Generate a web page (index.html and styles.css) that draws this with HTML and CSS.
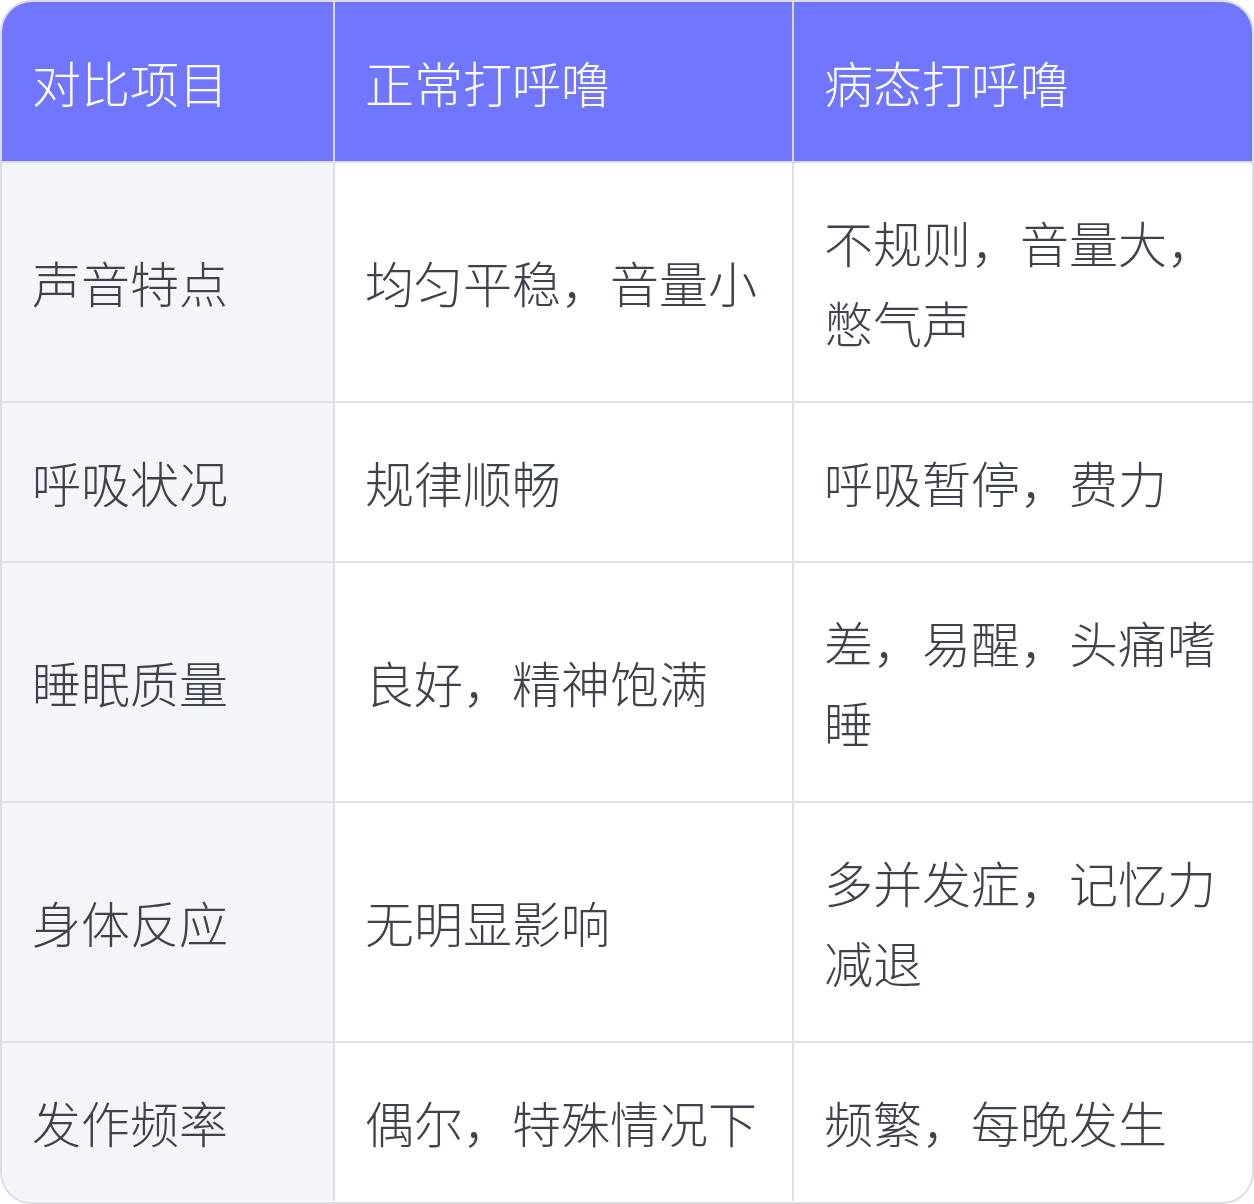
FILE: index.html
```html
<!DOCTYPE html>
<html lang="zh-CN">
<head>
<meta charset="utf-8">
<title>正常打呼噜与病态打呼噜对比</title>
<link rel="stylesheet" href="styles.css">
</head>
<body>
<div class="wrap">
  <table class="cmp">
    <colgroup>
      <col class="c1">
      <col class="c2">
      <col class="c3">
    </colgroup>
    <thead>
      <tr><th>对比项目</th><th>正常打呼噜</th><th>病态打呼噜</th></tr>
    </thead>
    <tbody>
      <tr><td>声音特点</td><td>均匀平稳，音量小</td><td>不规则，音量大，憋气声</td></tr>
      <tr><td>呼吸状况</td><td>规律顺畅</td><td>呼吸暂停，费力</td></tr>
      <tr><td>睡眠质量</td><td>良好，精神饱满</td><td>差，易醒，头痛嗜睡</td></tr>
      <tr><td>身体反应</td><td>无明显影响</td><td>多并发症，记忆力减退</td></tr>
      <tr><td>发作频率</td><td>偶尔，特殊情况下</td><td>频繁，每晚发生</td></tr>
    </tbody>
  </table>
</div>
</body>
</html>
```
FILE: styles.css
```css
html, body {
  margin: 0;
  padding: 0;
  background: #ffffff;
}
body {
  font-family: "Noto Sans CJK SC", "Noto Sans", sans-serif;
}
.wrap {
  width: 1254px;
  height: 1204px;
  box-sizing: border-box;
  border: 2px solid #dcdde3;
  border-radius: 32px;
  overflow: hidden;
}
.cmp {
  width: 100%;
  border-collapse: collapse;
  border-style: hidden;
  table-layout: fixed;
}
.c1 { width: 332px; }
.c2 { width: 459px; }
.c3 { width: 459px; }
.cmp th,
.cmp td {
  border: 2px solid #dfe0e5;
  padding: 39px 29px 39px 30px;
  font-size: 49px;
  line-height: 80px;
  font-weight: 300;
  text-align: left;
  vertical-align: middle;
  color: #3e424d;
}
.cmp th {
  background: #7076ff;
  color: #ffffff;
  padding-top: 40px;
  border-color: #d9daf3;
}
.cmp td:first-child {
  background: #f4f5f9;
}
```
